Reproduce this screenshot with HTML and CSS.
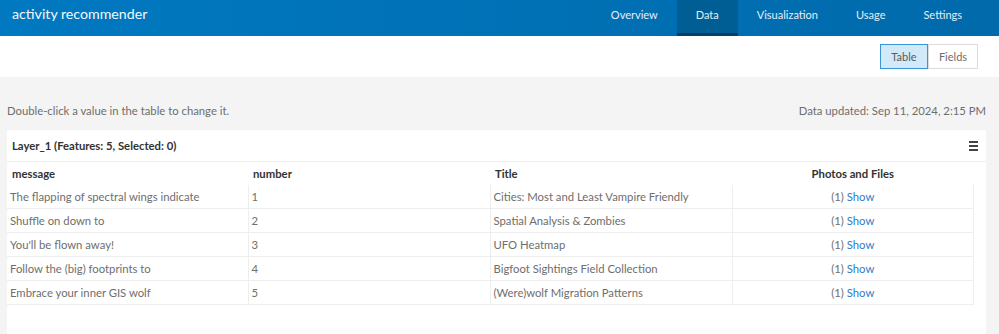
FILE: index.html
```html
<!DOCTYPE html>
<html lang="en">
<head>
    <meta charset="UTF-8">
    <title>activity recommender - Data</title>
    <link rel="stylesheet" href="styles.css">
</head>
<body>
    <header class="topbar">
        <div class="app-title">activity recommender</div>
        <nav class="tabs">
            <a href="#">Overview</a>
            <a href="#" class="active">Data</a>
            <a href="#">Visualization</a>
            <a href="#">Usage</a>
            <a href="#">Settings</a>
        </nav>
    </header>

    <div class="toolbar">
        <div class="toggle">
            <button class="selected">Table</button>
            <button>Fields</button>
        </div>
    </div>

    <main class="content">
        <div class="info-row">
            <span>Double-click a value in the table to change it.</span>
            <span>Data updated: Sep 11, 2024, 2:15 PM</span>
        </div>

        <section class="panel">
            <div class="panel-head">
                <span class="layer-name">Layer_1 (Features: 5, Selected: 0)</span>
                <span class="menu-icon"><i></i><i></i><i></i></span>
            </div>
            <table class="data-table">
                <thead>
                    <tr>
                        <th>message</th>
                        <th>number</th>
                        <th>Title</th>
                        <th class="center">Photos and Files</th>
                    </tr>
                </thead>
                <tbody>
                    <tr>
                        <td>The flapping of spectral wings indicate</td>
                        <td>1</td>
                        <td>Cities: Most and Least Vampire Friendly</td>
                        <td class="center">(1) <a href="#">Show</a></td>
                    </tr>
                    <tr>
                        <td>Shuffle on down to</td>
                        <td>2</td>
                        <td>Spatial Analysis &amp; Zombies</td>
                        <td class="center">(1) <a href="#">Show</a></td>
                    </tr>
                    <tr>
                        <td>You'll be flown away!</td>
                        <td>3</td>
                        <td>UFO Heatmap</td>
                        <td class="center">(1) <a href="#">Show</a></td>
                    </tr>
                    <tr>
                        <td>Follow the (big) footprints to</td>
                        <td>4</td>
                        <td>Bigfoot Sightings Field Collection</td>
                        <td class="center">(1) <a href="#">Show</a></td>
                    </tr>
                    <tr>
                        <td>Embrace your inner GIS wolf</td>
                        <td>5</td>
                        <td>(Were)wolf Migration Patterns</td>
                        <td class="center">(1) <a href="#">Show</a></td>
                    </tr>
                </tbody>
            </table>
        </section>
    </main>
</body>
</html>
```

FILE: styles.css
```css
body {
    font-family: Lato, "Open Sans", sans-serif;
    background-color: #f4f4f4;
    color: #6e6e6e;
    margin: 0;
    height: 334px;
    overflow: hidden;
}

.topbar {
    height: 36px;
    background: linear-gradient(90deg, #0079c1, #006aab);
    display: flex;
    justify-content: space-between;
    align-items: stretch;
    color: white;
}

.app-title {
    font-size: 14.2px;
    padding-left: 12px;
    line-height: 28px;
    color: #f4f8fb;
}

.tabs {
    display: flex;
    padding-right: 18px;
}

.tabs a {
    color: #e3eef7;
    text-decoration: none;
    font-size: 11px;
    line-height: 29px;
    padding: 0 19px;
    border-bottom: 3px solid transparent;
}

.tabs a.active {
    background-color: #005e95;
    border-bottom-color: #003f66;
}

.toolbar {
    height: 41px;
    background-color: white;
    display: flex;
    justify-content: flex-end;
    align-items: center;
    padding-right: 21px;
}

.toggle {
    display: flex;
}

.toggle button {
    font-family: inherit;
    font-size: 11px;
    color: #6e6e6e;
    background-color: white;
    border: 1px solid #dcdcdc;
    height: 25px;
    width: 50px;
    padding: 0;
    margin: 0;
}

.toggle button.selected {
    width: 48px;
    background-color: #d2e9f9;
    border-color: #3a95d6;
    color: #5a5a5a;
}

.content {
    padding: 0 13px 0 7px;
}

.info-row {
    display: flex;
    justify-content: space-between;
    font-size: 11.3px;
    height: 53px;
    align-items: flex-end;
    padding-bottom: 13px;
    box-sizing: border-box;
}

.panel {
    background-color: white;
    height: 204px;
}

.panel-head {
    display: flex;
    justify-content: space-between;
    align-items: center;
    height: 31px;
    padding: 0 8px 0 5px;
    border-bottom: 1px solid #eeeeee;
    color: #323232;
    font-size: 11.3px;
    font-weight: bold;
}

.menu-icon {
    display: flex;
    flex-direction: column;
    gap: 2px;
    width: 9px;
}

.menu-icon i {
    display: block;
    height: 2px;
    background-color: #444;
}

.data-table {
    border-collapse: collapse;
    width: 967px;
    table-layout: fixed;
    font-size: 11.3px;
}

.data-table th {
    text-align: left;
    color: #323232;
    font-weight: bold;
    height: 23px;
    padding: 0 5px;
}

.data-table td {
    height: 23px;
    padding: 0 3px;
    border: 1px solid #eeeeee;
    border-top: none;
    white-space: nowrap;
}

.data-table td:first-child {
    border-left: none;
}

.data-table th:first-child {
    width: 231px;
}

.data-table th:nth-child(2),
.data-table th:nth-child(3) {
    width: 232px;
}

.data-table .center {
    text-align: center;
}

.data-table a {
    color: #2f7dc4;
    text-decoration: none;
}
```
